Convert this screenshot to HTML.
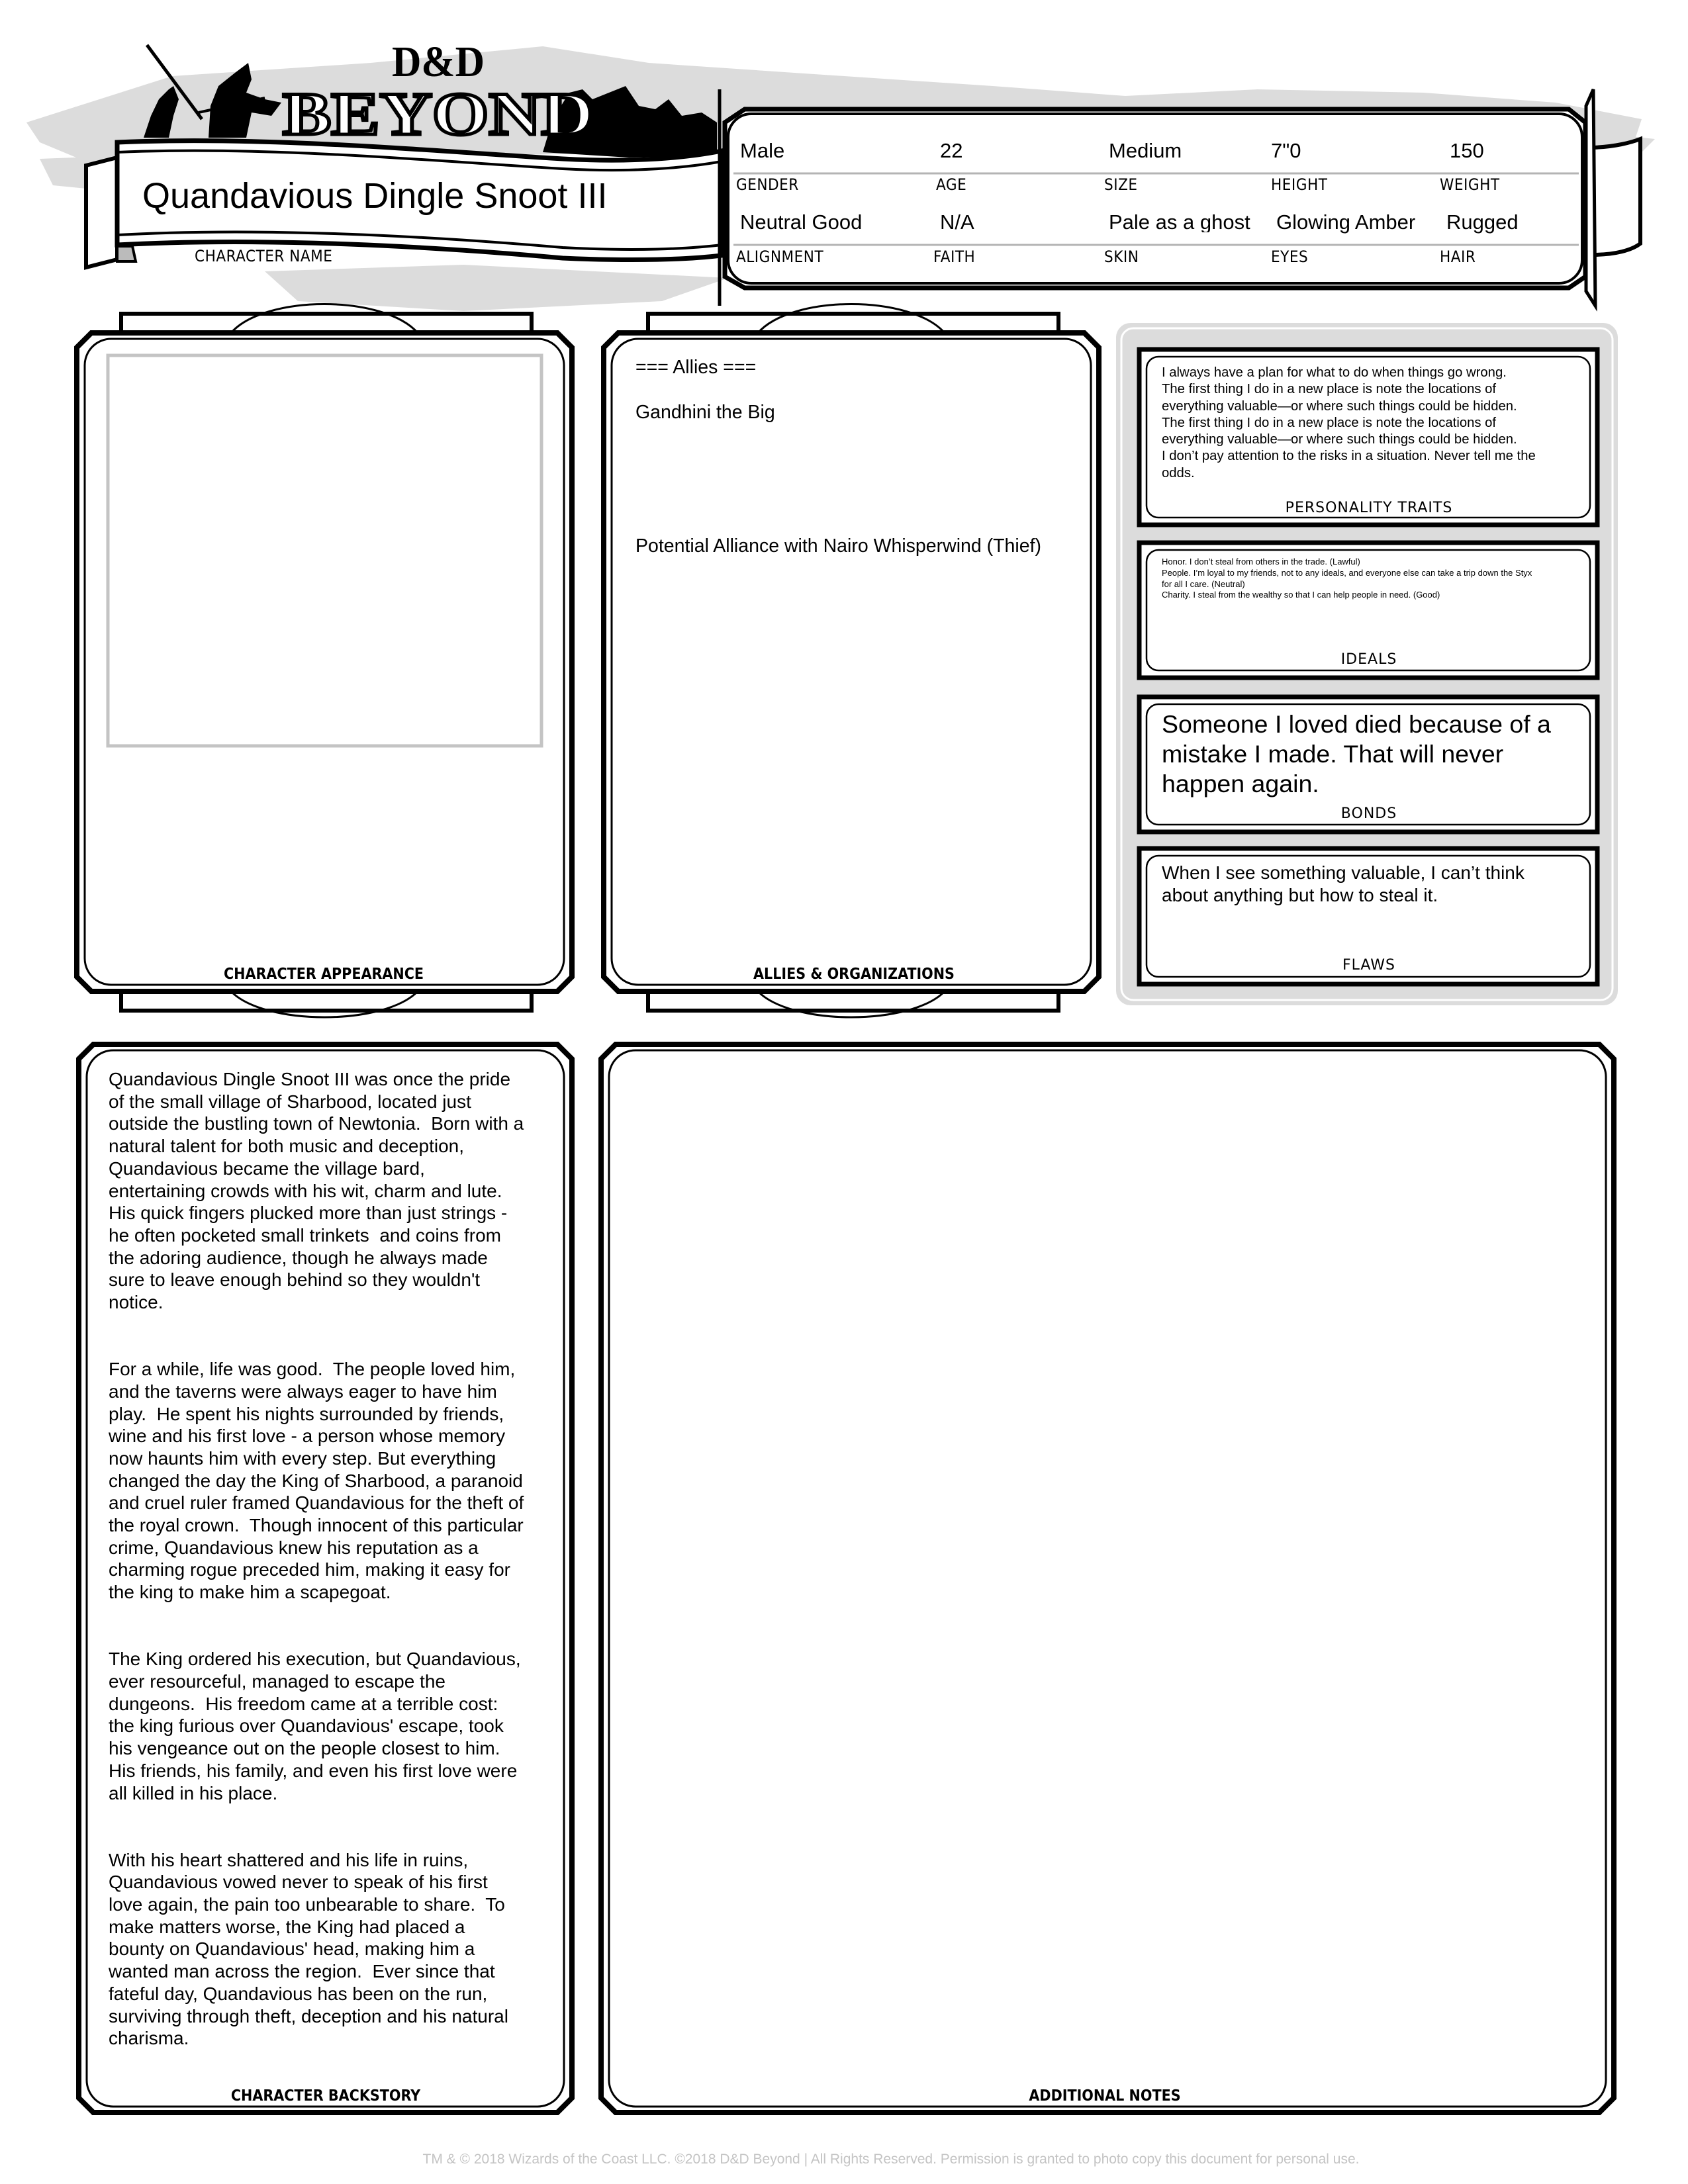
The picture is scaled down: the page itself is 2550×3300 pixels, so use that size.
<!DOCTYPE html>
<html><head><meta charset="utf-8">
<style>
html,body{margin:0;padding:0;background:#fff}
body{width:2550px;height:3300px;position:relative;overflow:hidden;font-family:"Liberation Sans",Arial,sans-serif;color:#000}
.t{position:absolute;white-space:nowrap;line-height:1}
.lbl{position:absolute;white-space:nowrap;font-size:24px;letter-spacing:0.5px;line-height:1;font-family:"DejaVu Sans Condensed","Liberation Sans",sans-serif}
.blbl{position:absolute;white-space:nowrap;font-size:23px;font-weight:bold;line-height:1;transform:translateX(-50%);font-family:"DejaVu Sans Condensed","Liberation Sans",sans-serif}
.clbl{position:absolute;white-space:nowrap;font-size:22px;line-height:1;transform:translateX(-50%);letter-spacing:1px;font-family:"DejaVu Sans","Liberation Sans",sans-serif}
svg{position:absolute;left:0;top:0}
</style></head><body>
<svg width="2550" height="3300" viewBox="0 0 2550 3300">
<g fill="#dcdcdc">
<polygon points="40,185 260,115 560,95 820,70 980,95 1200,110 1500,130 1700,145 1900,135 2150,140 2350,155 2480,180 2470,210 2300,215 1700,220 1100,225 600,240 300,230 120,240 60,215"/>
<polygon points="60,240 320,230 520,250 280,300 80,280"/>
<polygon points="400,410 700,400 1100,420 1000,455 700,470 450,455"/>
<polygon points="2410,200 2500,210 2470,240 2410,240"/>
</g>
<!-- ribbon -->
<path d="M130,250 L177,238 L177,392 L130,404 Z" fill="#fff" stroke="#000" stroke-width="6"/>
<path d="M177,372 L200,372 L205,395 L177,395 Z" fill="#bbb" stroke="#000" stroke-width="4"/>
<!-- silhouettes -->
<g fill="#000">
<path d="M217,208 L228,175 L240,150 L255,135 L262,130 L270,150 L262,175 L255,208 Z"/>
<path d="M315,208 L318,160 L330,130 L355,110 L375,95 L380,120 L372,140 L400,150 L425,155 L410,175 L380,170 L372,208 Z"/>
<path d="M820,230 L835,180 L860,140 L880,135 L895,150 L920,140 L945,130 L965,160 L990,165 L1010,150 L1030,175 L1060,170 L1083,185 L1083,235 L950,238 Z"/>
</g>
<line x1="222" y1="68" x2="305" y2="180" stroke="#000" stroke-width="5"/>
<line x1="300" y1="170" x2="400" y2="148" stroke="#000" stroke-width="4"/>
<path d="M177,215 C400,205 650,228 850,240 C960,246 1040,238 1090,228 L1090,386 C1040,392 960,395 850,390 C650,372 400,358 177,370 Z" fill="#fff" stroke="#000" stroke-width="7"/>
<path d="M177,230 C400,220 650,243 850,255 C960,261 1040,253 1090,244" fill="none" stroke="#000" stroke-width="4"/>
<path d="M177,355 C400,343 650,357 850,374 C960,380 1040,376 1090,370" fill="none" stroke="#000" stroke-width="4"/>
<path d="M2405,223 C2440,222 2465,215 2478,210 L2478,368 C2465,378 2440,385 2405,385 Z" fill="#fff" stroke="#000" stroke-width="6"/>
<text x="662" y="115" font-family="Liberation Serif,serif" font-weight="bold" font-size="66" text-anchor="middle" fill="#000" textLength="140" lengthAdjust="spacingAndGlyphs">D&amp;D</text>
<text x="662" y="203" font-family="Liberation Serif,serif" font-weight="bold" font-size="92" text-anchor="middle" fill="#fff" stroke="#000" stroke-width="5" textLength="470" lengthAdjust="spacingAndGlyphs">BEYOND</text>
<!-- info box -->
<path d="M1087,135 L1087,462" stroke="#000" stroke-width="5"/>
<path d="M1095,185 L1125,165 L2370,165 L2395,185 L2395,418 L2370,435 L1125,435 L1095,418 Z" fill="#fff" stroke="#000" stroke-width="7"/>
<rect x="1100" y="172" width="1290" height="256" rx="35" fill="#fff" stroke="#000" stroke-width="4"/>
<path d="M2396,160 L2407,135 L2410,462 L2396,440 Z" fill="#fff" stroke="#000" stroke-width="5"/>
<line x1="1108" y1="262" x2="2385" y2="262" stroke="#b4b4b4" stroke-width="3"/>
<line x1="1108" y1="370" x2="2385" y2="370" stroke="#b4b4b4" stroke-width="3"/>
<g fill="#fff" stroke="#000">
<path d="M183,474 L803,474 L803,505 L183,505 Z" stroke-width="6"/>
<path d="M349,503 C400,445 580,445 631,503" fill="none" stroke-width="3"/>
<path d="M183,1498 L803,1498 L803,1527 L183,1527 Z" stroke-width="6"/>
<path d="M349,1498 C400,1550 580,1550 631,1498" fill="none" stroke-width="3"/>
<path d="M979,474 L1599,474 L1599,505 L979,505 Z" stroke-width="6"/>
<path d="M1145,503 C1196,445 1376,445 1427,503" fill="none" stroke-width="3"/>
<path d="M979,1498 L1599,1498 L1599,1527 L979,1527 Z" stroke-width="6"/>
<path d="M1145,1498 C1196,1550 1376,1550 1427,1498" fill="none" stroke-width="3"/>
</g>
<g fill="#fff" stroke="#000">
<path d="M116,525 L138,503 L842,503 L864,525 L864,1476 L842,1498 L138,1498 L116,1476 Z" stroke-width="8"/>
<rect x="128" y="512" width="724" height="976" rx="40" fill="none" stroke-width="3"/>
<path d="M912,525 L934,503 L1638,503 L1660,525 L1660,1476 L1638,1498 L934,1498 L912,1476 Z" stroke-width="8"/>
<rect x="924" y="512" width="724" height="976" rx="40" fill="none" stroke-width="3"/>
<path d="M119,1600 L141,1578 L842,1578 L864,1600 L864,3170 L842,3192 L141,3192 L119,3170 Z" stroke-width="8"/>
<rect x="131" y="1587" width="721" height="1596" rx="40" fill="none" stroke-width="3"/>
<path d="M908,1600 L930,1578 L2416,1578 L2438,1600 L2438,3170 L2416,3192 L930,3192 L908,3170 Z" stroke-width="8"/>
<rect x="920" y="1587" width="1506" height="1596" rx="40" fill="none" stroke-width="3"/>
</g>
<rect x="163" y="537" width="655" height="590" fill="none" stroke="#c4c4c4" stroke-width="5"/>
<rect x="1686" y="488" width="758" height="1031" rx="22" fill="#dcdcdc"/>
<rect x="1694" y="496" width="742" height="1015" rx="18" fill="none" stroke="#fff" stroke-width="3"/>
<g fill="#fff" stroke="#000">
<rect x="1721" y="528" width="692" height="265" stroke-width="7"/>
<rect x="1732" y="539" width="670" height="243" rx="18" fill="none" stroke-width="2.5"/>
<rect x="1721" y="820" width="692" height="204" stroke-width="7"/>
<rect x="1732" y="831" width="670" height="182" rx="18" fill="none" stroke-width="2.5"/>
<rect x="1721" y="1053" width="692" height="204" stroke-width="7"/>
<rect x="1732" y="1064" width="670" height="182" rx="18" fill="none" stroke-width="2.5"/>
<rect x="1721" y="1282" width="692" height="205" stroke-width="7"/>
<rect x="1732" y="1293" width="670" height="183" rx="18" fill="none" stroke-width="2.5"/>
</g>
</svg>

<div class="t" style="left:215px;top:269px;font-size:54px">Quandavious Dingle Snoot III</div>
<div class="lbl" style="left:294px;top:375px">CHARACTER NAME</div>

<div class="t" style="left:1118px;top:212px;font-size:31px">Male</div>
<div class="t" style="left:1420px;top:212px;font-size:31px">22</div>
<div class="t" style="left:1675px;top:212px;font-size:31px">Medium</div>
<div class="t" style="left:1920px;top:212px;font-size:31px">7"0</div>
<div class="t" style="left:2190px;top:212px;font-size:31px">150</div>
<div class="lbl" style="left:1112px;top:267px">GENDER</div>
<div class="lbl" style="left:1414px;top:267px">AGE</div>
<div class="lbl" style="left:1668px;top:267px">SIZE</div>
<div class="lbl" style="left:1920px;top:267px">HEIGHT</div>
<div class="lbl" style="left:2175px;top:267px">WEIGHT</div>
<div class="t" style="left:1118px;top:320px;font-size:31px">Neutral Good</div>
<div class="t" style="left:1420px;top:320px;font-size:31px">N/A</div>
<div class="t" style="left:1675px;top:320px;font-size:31px;width:230px;overflow:hidden">Pale as a ghost</div>
<div class="t" style="left:1928px;top:320px;font-size:31px">Glowing Amber</div>
<div class="t" style="left:2185px;top:320px;font-size:31px">Rugged</div>
<div class="lbl" style="left:1112px;top:376px">ALIGNMENT</div>
<div class="lbl" style="left:1410px;top:376px">FAITH</div>
<div class="lbl" style="left:1668px;top:376px">SKIN</div>
<div class="lbl" style="left:1920px;top:376px">EYES</div>
<div class="lbl" style="left:2175px;top:376px">HAIR</div>

<div class="t" style="left:960px;top:541px;font-size:28.5px">=== Allies ===</div>
<div class="t" style="left:960px;top:609px;font-size:28.5px">Gandhini the Big</div>
<div class="t" style="left:960px;top:811px;font-size:28.5px">Potential Alliance with Nairo Whisperwind (Thief)</div>

<div class="blbl" style="left:489px;top:1461px">CHARACTER APPEARANCE</div>
<div class="blbl" style="left:1290px;top:1461px">ALLIES &amp; ORGANIZATIONS</div>

<div class="t" style="left:1755px;top:551px;font-size:20.3px;line-height:25.3px">I always have a plan for what to do when things go wrong.<br>The first thing I do in a new place is note the locations of<br>everything valuable—or where such things could be hidden.<br>The first thing I do in a new place is note the locations of<br>everything valuable—or where such things could be hidden.<br>I don’t pay attention to the risks in a situation. Never tell me the<br>odds.</div>
<div class="clbl" style="left:2068px;top:757px">PERSONALITY TRAITS</div>
<div class="t" style="left:1755px;top:841px;font-size:13px;line-height:16.8px">Honor. I don’t steal from others in the trade. (Lawful)<br>People. I’m loyal to my friends, not to any ideals, and everyone else can take a trip down the Styx<br>for all I care. (Neutral)<br>Charity. I steal from the wealthy so that I can help people in need. (Good)</div>
<div class="clbl" style="left:2068px;top:986px">IDEALS</div>
<div class="t" style="left:1755px;top:1072px;font-size:37.5px;line-height:45px">Someone I loved died because of a<br>mistake I made. That will never<br>happen again.</div>
<div class="clbl" style="left:2068px;top:1219px">BONDS</div>
<div class="t" style="left:1755px;top:1302px;font-size:28px;line-height:33.5px">When I see something valuable, I can’t think<br>about anything but how to steal it.</div>
<div class="clbl" style="left:2068px;top:1448px">FLAWS</div>

<div class="t" style="left:164px;top:1614px;font-size:28px;line-height:33.7px">Quandavious Dingle Snoot III was once the pride<br>of the small village of Sharbood, located just<br>outside the bustling town of Newtonia.&nbsp; Born with a<br>natural talent for both music and deception,<br>Quandavious became the village bard,<br>entertaining crowds with his wit, charm and lute.<br>His quick fingers plucked more than just strings -<br>he often pocketed small trinkets&nbsp; and coins from<br>the adoring audience, though he always made<br>sure to leave enough behind so they wouldn't<br>notice.<br><br><br>For a while, life was good.&nbsp; The people loved him,<br>and the taverns were always eager to have him<br>play.&nbsp; He spent his nights surrounded by friends,<br>wine and his first love - a person whose memory<br>now haunts him with every step. But everything<br>changed the day the King of Sharbood, a paranoid<br>and cruel ruler framed Quandavious for the theft of<br>the royal crown.&nbsp; Though innocent of this particular<br>crime, Quandavious knew his reputation as a<br>charming rogue preceded him, making it easy for<br>the king to make him a scapegoat.<br><br><br>The King ordered his execution, but Quandavious,<br>ever resourceful, managed to escape the<br>dungeons.&nbsp; His freedom came at a terrible cost:<br>the king furious over Quandavious' escape, took<br>his vengeance out on the people closest to him.<br>His friends, his family, and even his first love were<br>all killed in his place.<br><br><br>With his heart shattered and his life in ruins,<br>Quandavious vowed never to speak of his first<br>love again, the pain too unbearable to share.&nbsp; To<br>make matters worse, the King had placed a<br>bounty on Quandavious' head, making him a<br>wanted man across the region.&nbsp; Ever since that<br>fateful day, Quandavious has been on the run,<br>surviving through theft, deception and his natural<br>charisma.</div>
<div class="blbl" style="left:492px;top:3156px">CHARACTER BACKSTORY</div>
<div class="blbl" style="left:1669px;top:3156px">ADDITIONAL NOTES</div>

<div class="t" style="left:1346px;top:3252px;font-size:21px;color:#c4c4c4;transform:translateX(-50%)">TM &amp; © 2018 Wizards of the Coast LLC. ©2018 D&amp;D Beyond | All Rights Reserved. Permission is granted to photo copy this document for personal use.</div>
</body></html>
